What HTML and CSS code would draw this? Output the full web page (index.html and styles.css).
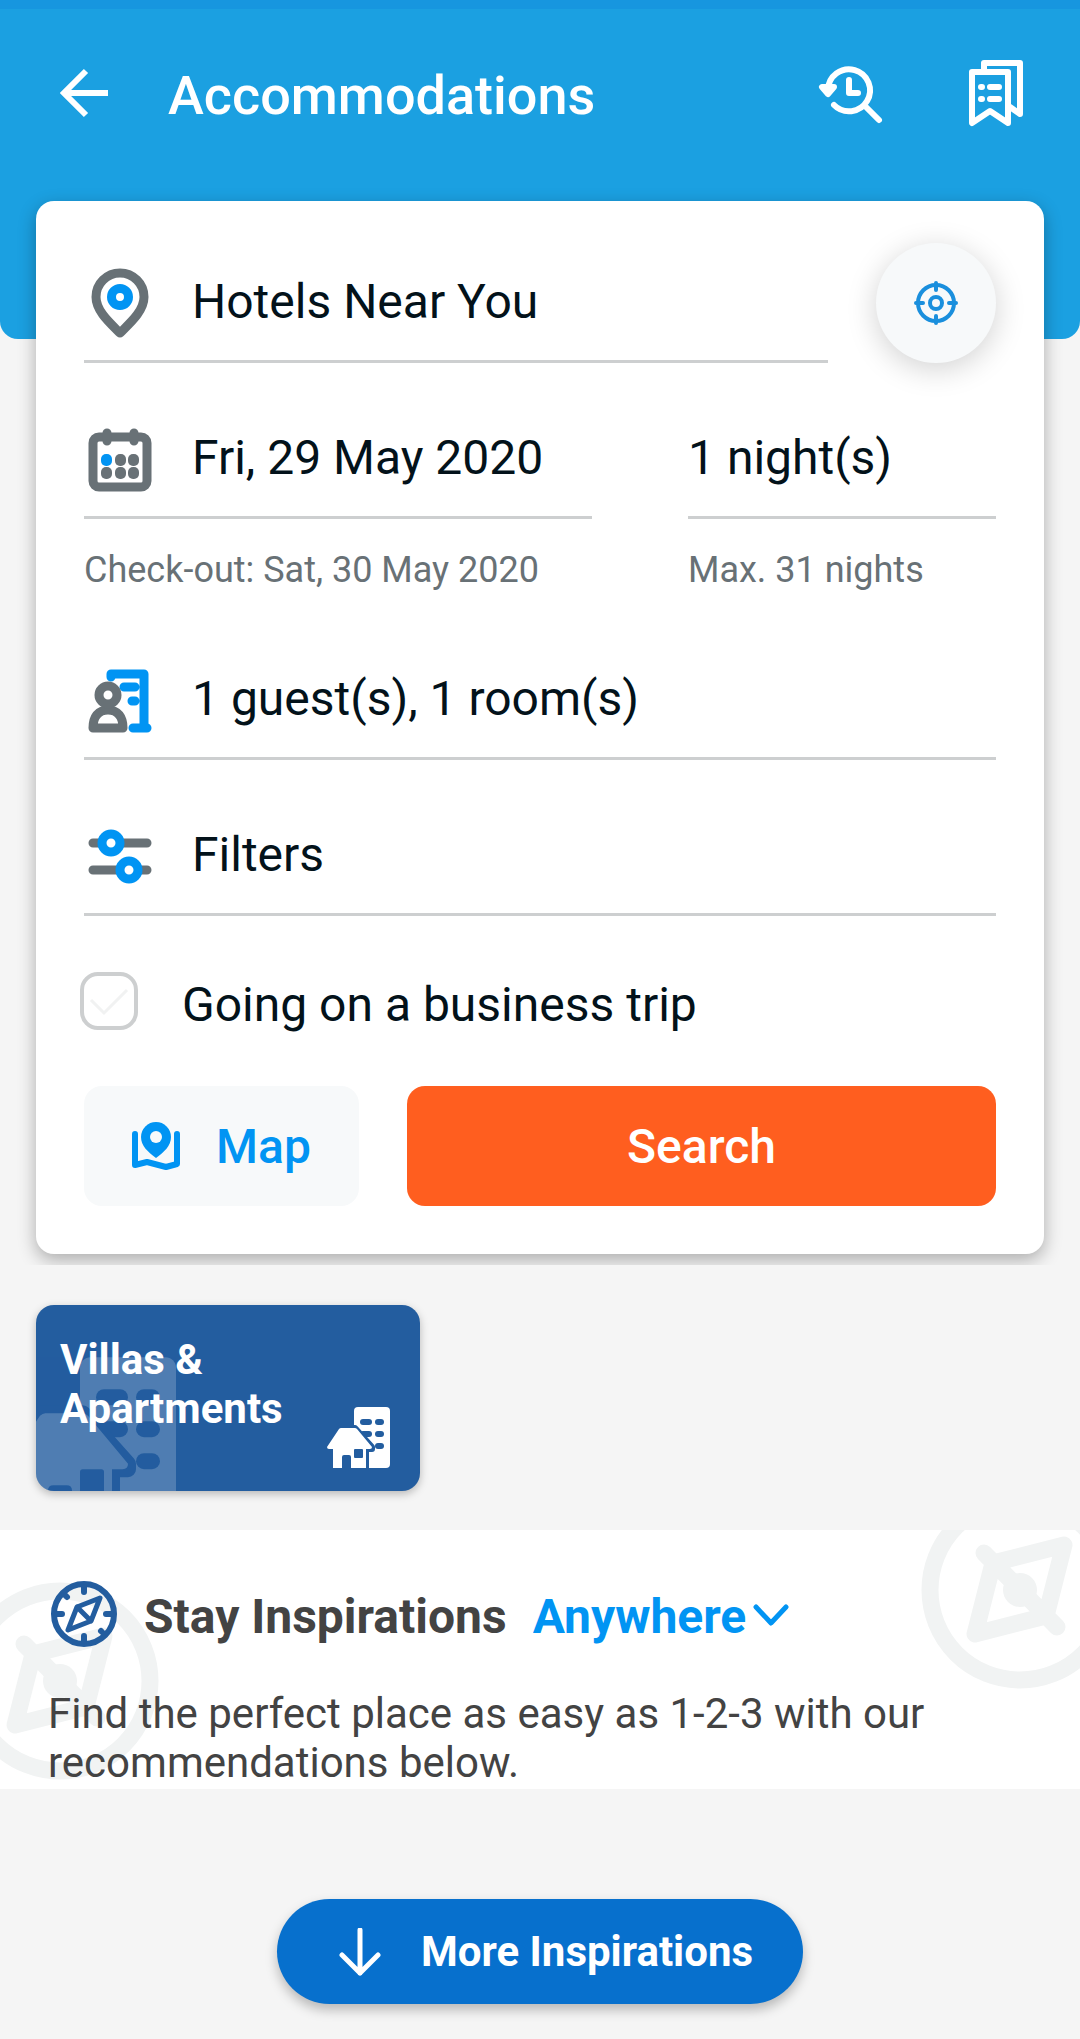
FILE: index.html
```html
<!DOCTYPE html>
<html lang="en">
<head>
  <meta charset="utf-8">
  <meta name="viewport" content="width=device-width">
  <title>Accommodations</title>
  <link rel="stylesheet" href="styles.css">
</head>
<body>
  <div class="hero">
    <header class="header">
      <div class="toolbar">
        <button class="icon-btn" type="button" aria-label="Back">
          <svg class="icon" viewBox="0 0 72 72" fill="none" stroke="#fff" stroke-width="6">
            <path d="M60 34H17M38 12L16 34l22 22"/>
          </svg>
        </button>
        <h1 class="title">Accommodations</h1>
        <button class="icon-btn" type="button" aria-label="Recent searches">
          <svg class="icon" viewBox="0 0 72 72" fill="none" stroke="#fff" stroke-width="6" stroke-linecap="round" stroke-linejoin="round">
            <path d="M12 31A21 21 0 1 1 18 46M48 46l15 15M33 21v13h9"/>
            <path d="M6 28h12l-6 7z" fill="#fff"/>
          </svg>
        </button>
        <button class="icon-btn" type="button" aria-label="Saved">
          <svg class="icon" viewBox="0 0 72 72" fill="none" stroke="#fff" stroke-width="6" stroke-linecap="round" stroke-linejoin="round">
            <path d="M24 12V4h36v51l-10-7"/>
            <path d="M12 64V13h36v51L30 52z"/>
            <path d="M21 28h1M30 28h9M21 40h1M30 40h9"/>
          </svg>
        </button>
      </div>
    </header>

    <form class="card">
      <div class="row">
        <div class="field">
          <svg class="icon" viewBox="0 0 72 72" fill="none">
            <path d="M36 67C26 57 12 45 12 31a24 24 0 0 1 48 0c0 14-14 26-24 36z" stroke="#687176" stroke-width="9" stroke-linejoin="round"/>
            <circle cx="36" cy="31" r="8.5" stroke="#0194f3" stroke-width="9"/>
          </svg>
          <input class="field-value" type="text" aria-label="Destination" value="Hotels Near You">
        </div>
        <button class="locate" type="button" aria-label="Use my location">
          <svg viewBox="0 0 44 44" fill="none" stroke="#1a8fdd" stroke-width="4" stroke-linecap="round">
            <circle cx="22" cy="22" r="18"/>
            <circle cx="22" cy="22" r="6"/>
            <path d="M22 2v7M22 35v7M2 22h7M35 22h7"/>
          </svg>
        </button>
      </div>

      <div class="row dates">
        <div class="stay">
          <div class="field">
            <svg class="icon" viewBox="0 0 72 72" fill="none" stroke="#687176" stroke-width="9" stroke-linecap="round">
              <rect x="9" y="15" width="54" height="50" rx="6"/>
              <path d="M23 11v8M50 11v8"/>
              <g stroke="none" fill="#687176">
                <rect x="17" y="32" width="11" height="12" rx="5" fill="#0194f3"/>
                <rect x="31" y="32" width="11" height="12" rx="5"/>
                <rect x="44" y="32" width="11" height="12" rx="5"/>
                <rect x="17" y="45" width="11" height="12" rx="5"/>
                <rect x="31" y="45" width="11" height="12" rx="5"/>
                <rect x="44" y="45" width="11" height="12" rx="5"/>
              </g>
            </svg>
            <input class="field-value" type="text" aria-label="Check-in date" value="Fri, 29 May 2020">
          </div>
          <p class="hint">Check-out: Sat, 30 May 2020</p>
        </div>
        <div class="nights">
          <div class="field">
            <select class="field-value" aria-label="Duration">
              <option>1 night(s)</option>
            </select>
          </div>
          <p class="hint">Max. 31 nights</p>
        </div>
      </div>

      <button class="field" type="button">
        <svg class="icon" viewBox="0 0 72 72" fill="none" stroke-width="9" stroke-linecap="round" stroke-linejoin="round">
          <path d="M27 14v-3h33v54M49 65h14M40 24h11M48 38h3" stroke="#0194f3"/>
          <path d="M9 65c0-11 5-18 15-18s15 7 15 18z" fill="#fff" stroke="#687176"/>
          <circle cx="24" cy="32" r="9" fill="#fff" stroke="#687176"/>
        </svg>
        <span class="field-value">1 guest(s), 1 room(s)</span>
      </button>

      <button class="field" type="button">
        <svg class="icon" viewBox="0 0 72 72" fill="#fff" stroke="#687176" stroke-width="9" stroke-linecap="round">
          <path d="M9 24h54M9 51h54"/>
          <g stroke="#0194f3">
            <circle cx="27" cy="24" r="9"/>
            <circle cx="45" cy="51" r="9"/>
          </g>
        </svg>
        <span class="field-value">Filters</span>
      </button>

      <div class="business">
        <span class="check">
          <input type="checkbox" id="business">
          <svg viewBox="0 0 58 58" fill="none" stroke="#f1f2f2" stroke-width="3"><path d="M11 28l13 13 23-23"/></svg>
        </span>
        <label for="business">Going on a business trip</label>
      </div>

      <div class="row">
        <button class="btn btn-map" type="button">
          <svg viewBox="0 0 48 48">
            <path d="M3 12v31l12-3 19 5 11-3V12" fill="none" stroke="#0194f3" stroke-width="6" stroke-linecap="round" stroke-linejoin="round"/>
            <path d="M24 0a15 15 0 0 0-15 15c0 9 7 15 15 21 8-6 15-12 15-21A15 15 0 0 0 24 0z" fill="#0194f3"/>
            <circle cx="24" cy="15" r="6" fill="#f7f9fa"/>
          </svg>
          Map
        </button>
        <button class="btn btn-search" type="submit">Search</button>
      </div>
    </form>
  </div>

  <a class="tile" href="#">
    <svg class="tile-ghost" viewBox="0 0 63 61"><use href="#villa"/></svg>
    <span class="tile-name">Villas &amp;<br>Apartments</span>
    <svg class="tile-icon" viewBox="0 0 63 61">
      <g id="villa">
        <rect x="27" width="36" height="61" rx="4" fill="#fff"/>
        <g fill="#235d9f">
          <rect x="33" y="12" width="12" height="6" rx="3"/>
          <rect x="48" y="12" width="9" height="6" rx="3"/>
          <rect x="33" y="24" width="12" height="6" rx="3"/>
          <rect x="48" y="24" width="9" height="6" rx="3"/>
          <rect x="48" y="36" width="9" height="6" rx="3"/>
        </g>
        <path d="M13 21h15l17 19v2h-6v19H24V48h-9v13H6V42H0v-2z" fill="#235d9f" stroke="#235d9f" stroke-width="6" stroke-linejoin="round"/>
        <path d="M14 21h14q1 0 2 1l15 18q0 2-2 2h-4v19H24V50q0-2-2-2h-5q-2 0-2 2v11H6V42H2q-2 0-2-2l12-18q1-1 2-1z" fill="#fff"/>
        <rect x="27" y="42" width="9" height="9" rx="1" fill="#235d9f"/>
      </g>
    </svg>
  </a>

  <section class="inspirations">
    <svg class="ghost ghost-left" viewBox="0 0 198 198"><use href="#compass"/></svg>
    <svg class="ghost ghost-right" viewBox="0 0 198 198">
      <g id="compass" fill="none" stroke="#f1f3f3" stroke-width="17" stroke-linecap="round" stroke-linejoin="round">
        <circle cx="99" cy="99" r="90"/>
        <path d="M143 54L72 72 54 143l71-18zM63 62l73 74"/>
        <circle cx="99" cy="99" r="17" fill="#f1f3f3" stroke="none"/>
      </g>
    </svg>
    <div class="insp-head">
      <svg class="icon" viewBox="0 0 72 72" fill="none" stroke="#235d9f" stroke-width="6" stroke-linecap="round" stroke-linejoin="round">
        <circle cx="36" cy="34" r="30"/>
        <path d="M36 7v5M36 56v5M9 34h5M58 34h5M18 16l1 1M53 51l1 1"/>
        <path d="M52 18L29 27l-9 23 23-9zM29 27l14 14" stroke-width="5"/>
      </svg>
      <h2 class="insp-title" id="insp-title">Stay Inspirations</h2>
      <span class="place">
        <select aria-labelledby="insp-title">
          <option>Anywhere</option>
        </select>
        <svg viewBox="0 0 36 24" fill="none" stroke="#0194f3" stroke-width="5" stroke-linecap="round" stroke-linejoin="round"><path d="M3 3l15 16L33 3"/></svg>
      </span>
    </div>
    <p class="insp-text">Find the perfect place as easy as 1-2-3 with our recommendations below.</p>
  </section>

  <button class="more" type="button">
    <svg viewBox="0 0 42 48" fill="none" stroke="#fff" stroke-width="5" stroke-linecap="round" stroke-linejoin="round"><path d="M21 2v43M3 27l18 18 18-18"/></svg>
    More Inspirations
  </button>
</body>
</html>
```
FILE: styles.css
```css
* {
  box-sizing: border-box;
}

body {
  margin: 0;
  padding-bottom: 30px;
  background: #f5f5f5;
  color: #03121a;
  font-family: Roboto, "Liberation Sans", sans-serif;
  font-size: 48px;
}

h1, h2, p {
  margin: 0;
}

button, input, select {
  margin: 0;
  padding: 0;
  border: 0;
  border-radius: 0;
  background: none;
  color: inherit;
  font: inherit;
  appearance: none;
}

svg {
  display: block;
  flex: none;
}

.icon {
  width: 72px;
  height: 72px;
}

/* header */
.hero {
  overflow: hidden;
  padding-bottom: 11px;
}

.header {
  height: 339px;
  border-top: 9px solid #1796df;
  border-radius: 0 0 18px 18px;
  background: #1ba0e1;
}

.toolbar {
  display: flex;
  align-items: center;
  gap: 72px;
  height: 172px;
  padding: 0 48px;
}

.title {
  flex: 1;
  margin-left: -24px;
  color: #fff;
  font-size: 54px;
  font-weight: 500;
}

/* search card */
.card {
  display: flex;
  flex-direction: column;
  gap: 36px;
  margin: -138px 36px 0;
  padding: 42px 48px 48px;
  border-radius: 18px;
  background: #fff;
  box-shadow: 0 6px 18px rgba(0, 0, 0, 0.3);
}

.row {
  display: flex;
  gap: 48px;
}

.dates {
  gap: 96px;
}

.field {
  display: flex;
  flex: 1;
  align-items: center;
  gap: 36px;
  min-width: 0;
  height: 120px;
  border-bottom: 3px solid #cdcfd0;
  text-align: left;
}

.card > .field {
  flex: none;
}

.field-value {
  flex: 1;
  min-width: 0;
}

.stay {
  flex: 1;
  min-width: 0;
}

.nights {
  width: 308px;
}

.hint {
  padding: 30px 0 13px;
  color: #687176;
  font-size: 36px;
  line-height: 42px;
}

.locate {
  display: flex;
  align-items: center;
  justify-content: center;
  width: 120px;
  height: 120px;
  border-radius: 50%;
  background: #f7f9fa;
  box-shadow: 0 6px 30px rgba(0, 0, 0, 0.18);
}

.locate svg {
  width: 44px;
  height: 44px;
}

.business {
  display: flex;
  align-items: center;
  gap: 44px;
  height: 98px;
  margin-left: -4px;
}

.business label {
  padding-top: 6px;
}

.check {
  display: grid;
  width: 58px;
  height: 58px;
}

.check > * {
  grid-area: 1 / 1;
}

.check input {
  border: 4px solid #cdcfd0;
  border-radius: 18px;
}

.check svg {
  pointer-events: none;
}

.btn {
  display: flex;
  align-items: center;
  justify-content: center;
  height: 120px;
  border-radius: 18px;
  font-weight: 500;
}

.btn-map {
  gap: 36px;
  width: 275px;
  background: #f7f9fa;
  color: #0194f3;
}

.btn-map svg {
  width: 48px;
  height: 48px;
}

.btn-search {
  flex: 1;
  background: #ff5e1f;
  color: #fff;
}

/* villas tile */
.tile {
  display: block;
  position: relative;
  overflow: hidden;
  width: 384px;
  height: 186px;
  margin: 40px 36px 39px;
  padding: 30px 24px;
  border-radius: 18px;
  background: #235d9f;
  box-shadow: 0 3px 9px rgba(0, 0, 0, 0.25);
  color: #fff;
  font-size: 42px;
  font-weight: 700;
  line-height: 49px;
  text-decoration: none;
}

.tile-name {
  position: relative;
}

.tile-icon {
  position: absolute;
  right: 30px;
  bottom: 23px;
  width: 63px;
  height: 61px;
}

.tile-ghost {
  position: absolute;
  top: 52px;
  left: -28px;
  width: 168px;
  height: 163px;
  opacity: 0.2;
}

/* inspirations */
.inspirations {
  position: relative;
  overflow: hidden;
  padding: 50px 48px 2px;
  background: #fff;
  color: #434343;
}

.ghost {
  position: absolute;
  width: 198px;
  height: 198px;
}

.ghost-left {
  top: 52px;
  left: -39px;
}

.ghost-right {
  top: -39px;
  right: -39px;
}

.insp-head {
  display: flex;
  position: relative;
  align-items: center;
  gap: 24px;
}

.insp-title {
  font-size: 48px;
  font-weight: 700;
}

.place {
  display: flex;
  align-items: center;
  gap: 6px;
  padding-left: 2px;
  color: #0194f3;
  font-weight: 700;
}

.place svg {
  width: 36px;
  height: 24px;
}

.insp-text {
  position: relative;
  margin-top: 37px;
  font-size: 42px;
  line-height: 49px;
}

.more {
  display: flex;
  align-items: center;
  gap: 40px;
  height: 105px;
  margin: 110px auto 0;
  padding: 0 50px 0 62px;
  border-radius: 53px;
  background: #0770cd;
  box-shadow: 0 6px 12px rgba(0, 0, 0, 0.25);
  color: #fff;
  font-size: 42px;
  font-weight: 700;
}

.more svg {
  width: 42px;
  height: 48px;
}
```
